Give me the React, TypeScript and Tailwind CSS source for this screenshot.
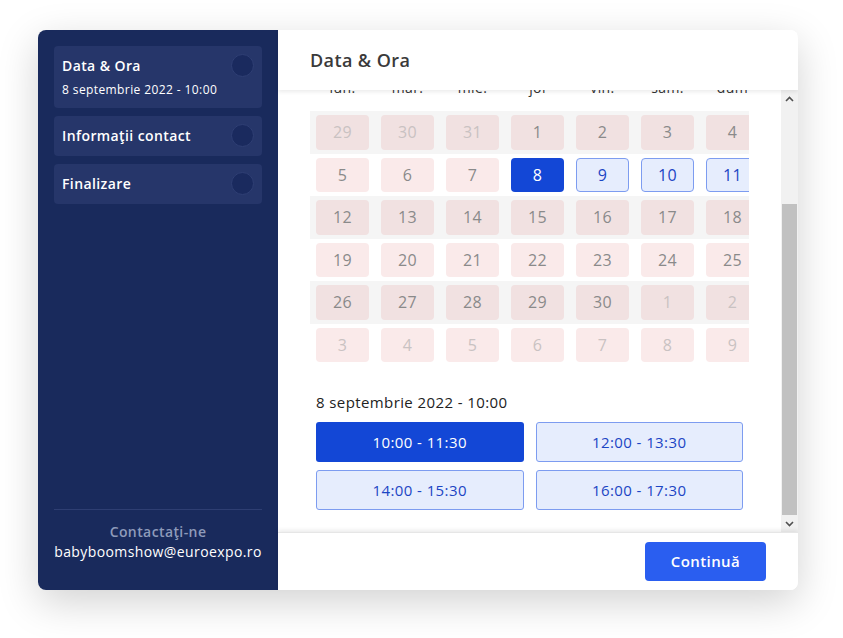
import React from "react";

const font = { fontFamily: '"Open Sans", "Noto Sans", sans-serif', letterSpacing: "0.025em" };

type Day = { n: number; kind: "out" | "past" | "sel" | "open" };

const weeks: Day[][] = [
  [
    { n: 29, kind: "out" },
    { n: 30, kind: "out" },
    { n: 31, kind: "out" },
    { n: 1, kind: "past" },
    { n: 2, kind: "past" },
    { n: 3, kind: "past" },
    { n: 4, kind: "past" },
  ],
  [
    { n: 5, kind: "past" },
    { n: 6, kind: "past" },
    { n: 7, kind: "past" },
    { n: 8, kind: "sel" },
    { n: 9, kind: "open" },
    { n: 10, kind: "open" },
    { n: 11, kind: "open" },
  ],
  [12, 13, 14, 15, 16, 17, 18].map((n) => ({ n, kind: "past" as const })),
  [19, 20, 21, 22, 23, 24, 25].map((n) => ({ n, kind: "past" as const })),
  [
    { n: 26, kind: "past" },
    { n: 27, kind: "past" },
    { n: 28, kind: "past" },
    { n: 29, kind: "past" },
    { n: 30, kind: "past" },
    { n: 1, kind: "out" },
    { n: 2, kind: "out" },
  ],
  [3, 4, 5, 6, 7, 8, 9].map((n) => ({ n, kind: "out" as const })),
];

const dayNames = ["lun.", "mar.", "mie.", "joi", "vin.", "sam.", "dum"];

function DayCell({ d }: { d: Day }) {
  let cls = "bg-[rgba(214,80,80,0.12)] text-[#8a8a8a]";
  if (d.kind === "out") cls = "bg-[rgba(214,80,80,0.12)] text-[#c9c2c2]";
  if (d.kind === "sel") cls = "bg-[#1347d6] text-white";
  if (d.kind === "open")
    cls = "bg-[#e6edfd] text-[#1c45c4] border border-[#7d9cf0]";
  return (
    <div className="w-[65px] shrink-0 px-[6px] py-[4px]">
      <div
        className={`h-[34.5px] rounded-[4px] flex items-center justify-center text-[16px] ${cls}`}
      >
        {d.n}
      </div>
    </div>
  );
}

function Step({ title, sub }: { title: string; sub?: string }) {
  return (
    <div className="bg-[#26366a] rounded-[4px] px-[8px] flex items-start justify-between">
      <div className={sub ? "pt-[10px] pb-[10px]" : "py-[10px]"}>
        <div className="text-[14px] font-semibold text-white leading-[20px]">{title}</div>
        {sub && (
          <div className="text-[12px] text-white leading-[16px] mt-[6px]">{sub}</div>
        )}
      </div>
      <div className="w-[23px] h-[23px] rounded-full bg-[#1a2a5e] border border-[#2f3f74] mt-[8px]" />
    </div>
  );
}

function TimeBtn({ label, active }: { label: string; active?: boolean }) {
  return (
    <div
      className={`h-[40px] rounded-[3px] flex items-center justify-center text-[15px] ${
        active
          ? "bg-[#1347d6] text-white"
          : "bg-[#e6edfd] text-[#1c45c4] border border-[#7d9cf0]"
      }`}
    >
      {label}
    </div>
  );
}

export default function App() {
  return (
    <div className="w-[843px] h-[638px] bg-white pt-[30px] pl-[38px]" style={font}>
      <div className="w-[760px] h-[560px] rounded-[8px] overflow-hidden flex shadow-[0_12px_40px_rgba(0,0,0,0.18)]">
        {/* sidebar */}
        <div className="w-[240px] bg-[#192a5c] flex flex-col px-[16px] pt-[16px] pb-[28px]">
          <div className="flex flex-col gap-[8px]">
            <Step title="Data & Ora" sub="8 septembrie 2022 - 10:00" />
            <Step title="Informaţii contact" />
            <Step title="Finalizare" />
          </div>
          <div className="mt-auto border-t border-[#2e3e72] pt-[12px] text-center">
            <div className="text-[14px] font-semibold text-[#8e9aba] leading-[20px]">
              Contactaţi-ne
            </div>
            <div className="text-[14px] text-white leading-[20px] whitespace-nowrap">
              babyboomshow@euroexpo.ro
            </div>
          </div>
        </div>

        {/* main panel */}
        <div className="flex-1 bg-white flex flex-col">
          <div className="h-[60px] shrink-0 flex items-center pl-[32px] relative z-10 bg-white shadow-[0_2px_4px_rgba(0,0,0,0.08)]">
            <div className="text-[18px] font-semibold text-[#3a3a3a]">Data &amp; Ora</div>
          </div>
          <div className="flex-1 flex min-h-0">
            <div className="flex-1 overflow-hidden px-[32px]">
              <div className="-mt-[17px]">
                <div className="w-[439px] overflow-hidden">
                  <div className="flex h-[28px] items-center">
                    {dayNames.map((n) => (
                      <div
                        key={n}
                        className="w-[65px] shrink-0 text-center text-[14px] text-[#333]"
                      >
                        {n}
                      </div>
                    ))}
                  </div>
                  <div className="mt-[10px]">
                    {weeks.map((w, i) => (
                      <div
                        key={i}
                        className={`flex ${i % 2 === 0 ? "bg-[#f5f5f5]" : "bg-white"}`}
                      >
                        {w.map((d, j) => (
                          <DayCell key={j} d={d} />
                        ))}
                      </div>
                    ))}
                  </div>
                </div>
                <div className="px-[6px] w-[439px]">
                  <div className="mt-[26px] text-[15px] text-[#222] leading-[20px]">
                    8 septembrie 2022 - 10:00
                  </div>
                  <div className="mt-[10px] grid grid-cols-2 gap-x-[12px] gap-y-[8px]">
                    <TimeBtn label="10:00 - 11:30" active />
                    <TimeBtn label="12:00 - 13:30" />
                    <TimeBtn label="14:00 - 15:30" />
                    <TimeBtn label="16:00 - 17:30" />
                  </div>
                </div>
              </div>
            </div>
            {/* scrollbar */}
            <div className="w-[17px] shrink-0 bg-[#f1f1f1] flex flex-col">
              <div className="h-[17px] flex items-center justify-center">
                <svg width="9" height="6" viewBox="0 0 9 6">
                  <path d="M1 5 L4.5 1.5 L8 5" stroke="#505050" strokeWidth="1.6" fill="none" />
                </svg>
              </div>
              <div className="h-[97px]" />
              <div className="flex-1 mx-[1px] bg-[#c1c1c1]" />
              <div className="h-[17px] flex items-center justify-center">
                <svg width="9" height="6" viewBox="0 0 9 6">
                  <path d="M1 1 L4.5 4.5 L8 1" stroke="#505050" strokeWidth="1.6" fill="none" />
                </svg>
              </div>
            </div>
          </div>
          <div className="h-[58px] shrink-0 relative bg-white shadow-[0_-2px_4px_rgba(0,0,0,0.08)] border-t border-[#e6e6e6] flex items-center justify-end pr-[32px]">
            <div className="w-[121px] h-[39px] rounded-[4px] bg-[#2a5ef0] text-white text-[15px] font-semibold flex items-center justify-center">
              Continuă
            </div>
          </div>
        </div>
      </div>
    </div>
  );
}
